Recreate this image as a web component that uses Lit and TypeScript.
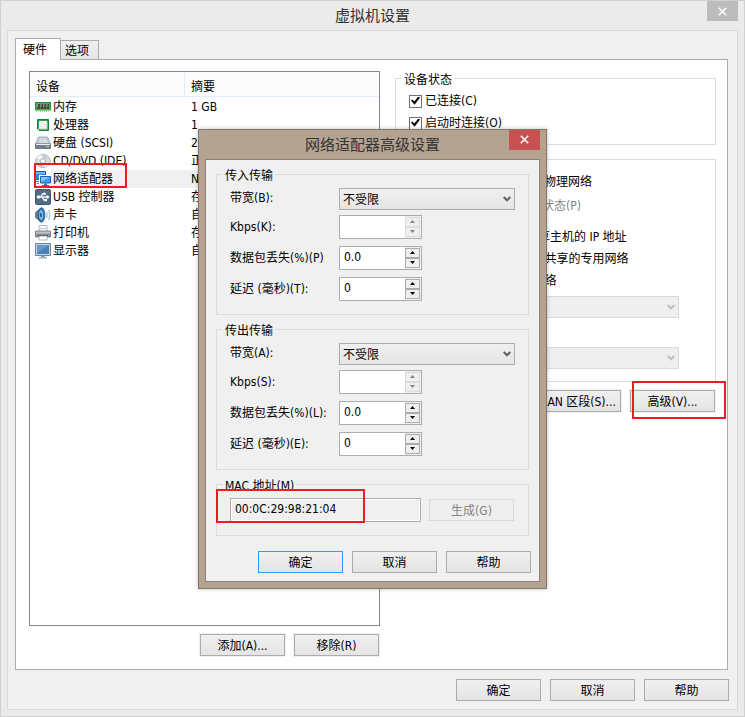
import { LitElement, html, css, svg } from "lit";
import { customElement, property } from "lit/decorators.js";
import { classMap } from "lit/directives/class-map.js";

const base = css`
  :host {
    font-family: "DejaVu Sans Condensed", "Noto Sans CJK SC", sans-serif;
    font-size: 12px;
    line-height: 18px;
    color: #000;
  }
  *,
  *::before {
    box-sizing: border-box;
  }
  button,
  input,
  select {
    font: inherit;
    color: inherit;
    margin: 0;
    border-radius: 0;
  }
  .btn {
    width: 85px;
    height: 22px;
    padding: 2px 0 0;
    line-height: 18px;
    border: 1px solid #acacac;
    background: linear-gradient(#f0f0f0, #e4e4e4);
    box-shadow: 0 0 0 1px #f0f0f0;
    white-space: nowrap;
  }
  .btn.primary {
    border-color: #3399ff;
  }
  .btn:disabled {
    border-color: #d9d9d9;
    background: #efefef;
    color: #838383;
  }
  .group {
    margin: 0;
    min-width: 0;
    padding: 6px 13px 13px;
    border: 1px solid #dcdcdc;
  }
  .group > legend {
    margin-left: -7px;
    padding: 0 2px;
    height: 15px;
    line-height: 18px;
  }
  .actions {
    display: flex;
    justify-content: flex-end;
    gap: 9px;
  }
  .title {
    margin: 0;
    font-size: 15px;
    font-weight: 400;
    line-height: 30px;
    text-align: center;
    color: #333;
  }
  .close {
    position: absolute;
    top: 0;
    right: 6px;
    width: 31px;
    height: 20px;
    padding: 0;
    border: 0;
    display: grid;
    place-items: center;
  }
  .mark {
    position: absolute;
    border: 2px solid #ed1c24;
    pointer-events: none;
  }
`;

const closeGlyph = html`<svg width="9" height="9" viewBox="0 0 9 9" aria-hidden="true">
  <path d="M.8.8 8.200 8.200M8.200.8.8 8.200" stroke="#fff" stroke-width="1.600" />
</svg>`;

const icons = {
  memory: svg`
    <path d="M0 3h16v9H0z" fill="#4fae57"/><path d="M0 3h16v1H0z" fill="#2b8a3d"/>
    <path d="M0 3h1v8H0zM15 3h1v8h-1z" fill="#2b8a3d"/>
    <path d="M2 5h3v5H2zM5.500 5h2.500v5H5.500zM8.500 5H11v5H8.500zM11.500 5H14v5h-2.500z" fill="#3f4742"/>
    <path d="M2 5h1v3H2zM5.500 5h1v3h-1zM8.500 5h1v3h-1zM11.500 5h1v3h-1z" fill="#959e97"/>
    <path d="M0 11h16v1H0z" fill="#8fcf8b"/>
    <path d="M1 12h1v1H1zM3 12h1v1H3zM5 12h1v1H5zM7 12h1v1H7zM9 12h1v1H9zM11 12h1v1h-1zM13 12h1v1h-1z" fill="#d5c98a"/>`,
  cpu: svg`
    <path d="M2.500 2.500h11v11h-11z" fill="#33a052" stroke="#178040"/>
    <path d="M4.500 4.500h7v7h-7z" fill="#efefef" stroke="#fff"/>
    <path d="M12 5v7H5" fill="none" stroke="#b9c9b9"/>
    <path d="M2 12h2v2H2z" fill="#c4e6ae"/>`,
  disk: svg`
    <path d="M3.500 2h9L15.500 9H.5z" fill="#c3c9d0" stroke="#98a0a9" stroke-width=".8"/>
    <path d="M5 3h6l2 5H4z" fill="#d6dbe0"/>
    <path d="M.5 9h15v4.500H.5z" fill="#727d89" stroke="#5c6672" stroke-width=".8"/>
    <path d="M1 9h14v1H1z" fill="#eef1f4"/><path d="M11 11h3v1h-3z" fill="#9be89b"/>`,
  cd: svg`
    <ellipse cx="8" cy="8" rx="7.500" ry="6.500" fill="#d9dde1" stroke="#a5acb3" stroke-width=".8"/>
    <path d="M8 8 1.500 5A8 7 0 0 1 6 1.800zM8 8l6.500 3A8 7 0 0 1 10 14.200z" fill="#f5f7f8"/>
    <path d="M8 8 9 1.800 12 3zM8 8 7 14.200 4 13z" fill="#bcc3ca"/>
    <ellipse cx="8" cy="8" rx="2.800" ry="2.400" fill="#eef1f3" stroke="#949ca4" stroke-width=".7"/>
    <circle cx="8" cy="8" r="1" fill="#fff"/>`,
  network: svg`
    <path d="M.5.500h10v8H.5z" fill="#2f8be0" stroke="#1d5fa6"/><path d="M1 1h9v2H1z" fill="#6fb5f2"/>
    <path d="M1 10h4v1H1zM2 12h3v1H2z" fill="#5f7f9f"/>
    <path d="M4 4h12v9H4z" fill="#fff"/>
    <path d="M5.500 5.500h10v6.500h-10z" fill="#3f9ced" stroke="#1e5fa5"/>
    <path d="M6 6h9l-9 5z" fill="#83c6fa"/>
    <path d="M9 12.500h3V14H9zM7 14h7v1.500H7z" fill="#3a6fa5"/>`,
  usb: svg`
    <rect x=".5" y=".5" width="15" height="15" rx="1.500" fill="#4f6b88" stroke="#415a74"/>
    <path d="M3 8h9M5.500 8l2-3h2M7 8l2 3h2" fill="none" stroke="#f4f6f8" stroke-width="1.300"/>
    <circle cx="3.500" cy="8" r="1.800" fill="#fff"/><path d="m11.500 5.800 3.300 2.200-3.300 2.200z" fill="#fff"/>
    <circle cx="9.500" cy="4.800" r="1.300" fill="#fff"/><path d="M9.500 10h2.500v2.200H9.500z" fill="#fff"/>`,
  sound: svg`
    <path d="M.5 5.500 6 1v14L.5 10.500z" fill="#6b7f93" stroke="#4b5c6d" stroke-width=".7"/>
    <ellipse cx="6.500" cy="8" rx="3.300" ry="7.200" fill="#2d7cc4" stroke="#33485d" stroke-width=".8"/>
    <ellipse cx="6" cy="8" rx="2" ry="4.800" fill="#7cc0f0"/>
    <ellipse cx="5.800" cy="8" rx="1" ry="2.300" fill="#1d5a99"/>
    <path d="M11.300 5q1.700 3 0 6M13.500 3q2.600 5 0 10" fill="none" stroke="#8cc4ee" stroke-width="1.100"/>`,
  printer: svg`
    <path d="M4 .500h8V7H4z" fill="#fafbfc" stroke="#a0a6ad" stroke-width=".8"/>
    <path d="M5 3h6v1H5z" fill="#c6cbd1"/>
    <path d="M.5 6h15v6H.5z" fill="#8b9199" stroke="#666d76" stroke-width=".8"/>
    <path d="M1 6.500h14v2H1z" fill="#bfc4ca"/>
    <path d="M3 10h10v1H3z" fill="#3c4148"/>
    <path d="M4 11h8v4H4z" fill="#fff" stroke="#a0a6ad" stroke-width=".8"/>`,
  display: svg`
    <path d="M.5.500h15v12H.5z" fill="#c9d3dd" stroke="#71859a"/>
    <path d="M2 2h12v9H2z" fill="#4681b8"/><path d="M2 2h12L2 10z" fill="#6699c8"/>
    <path d="M6 13h4v1H6z" fill="#8794a1"/><path d="M4 14h8v1.500H4z" fill="#a7b3bf"/>`,
};

type IconName = keyof typeof icons;

const devices: { icon: IconName; name: string; info: string; selected?: boolean }[] = [
  { icon: "memory", name: "内存", info: "1 GB" },
  { icon: "cpu", name: "处理器", info: "1" },
  { icon: "disk", name: "硬盘 (SCSI)", info: "20 GB" },
  { icon: "cd", name: "CD/DVD (IDE)", info: "正在使用文件" },
  { icon: "network", name: "网络适配器", info: "NAT", selected: true },
  { icon: "usb", name: "USB 控制器", info: "存在" },
  { icon: "sound", name: "声卡", info: "自动检测" },
  { icon: "printer", name: "打印机", info: "存在" },
  { icon: "display", name: "显示器", info: "自动检测" },
];

@customElement("drop-down")
class DropDown extends LitElement {
  @property() value = "";
  @property() label = "";
  @property({ type: Boolean }) disabled = false;

  static styles = [
    base,
    css`
      :host {
        display: grid;
        height: 22px;
      }
      select,
      svg {
        grid-area: 1 / 1;
      }
      select {
        appearance: none;
        width: 100%;
        height: 22px;
        padding: 2px 20px 0 3px;
        line-height: 18px;
        border: 1px solid #acacac;
        background: linear-gradient(#f0f0f0, #e5e5e5);
      }
      select:disabled {
        border-color: #d9d9d9;
        background: #efefef;
        opacity: 1;
      }
      svg {
        place-self: center end;
        margin-right: 4px;
        pointer-events: none;
      }
    `,
  ];

  render() {
    return html`<select aria-label=${this.label} ?disabled=${this.disabled}>
        <option>${this.value}</option>
      </select>
      <svg width="8" height="6" viewBox="0 0 8 6" aria-hidden="true">
        <path d="M.7 1 4 4.300 7.300 1" fill="none" stroke=${this.disabled ? "#bfbfbf" : "#606060"} stroke-width="2" />
      </svg>`;
  }
}

@customElement("spin-box")
class SpinBox extends LitElement {
  @property() value = "";
  @property() label = "";
  @property({ type: Boolean }) disabled = false;

  static styles = [
    base,
    css`
      :host {
        display: grid;
        grid-template-columns: 1fr 16px;
        width: 83px;
        height: 24px;
        border: 1px solid #abadb3;
        background: #fff;
        box-sizing: border-box;
      }
      input {
        min-width: 0;
        padding: 0 0 2px 4px;
        border: 0;
        background: #fff;
      }
      .arrows {
        display: grid;
        grid-template-rows: 1fr 1fr;
        padding: 1px 1px 1px 0;
        background: #f0f0f0;
      }
      button {
        display: grid;
        place-items: center;
        min-height: 0;
        padding: 0;
        border: 1px solid #acacac;
        background: #efefef;
      }
      button:disabled {
        border-color: #dcdcdc;
      }
      path {
        fill: #000;
      }
      button:disabled path {
        fill: #838383;
      }
    `,
  ];

  render() {
    const arrow = (name: string, d: string) => html`<button aria-label=${name} ?disabled=${this.disabled}>
      <svg width="5" height="3" viewBox="0 0 5 3" aria-hidden="true"><path d=${d} /></svg>
    </button>`;
    return html`<input type="text" inputmode="decimal" aria-label=${this.label} .value=${this.value} ?disabled=${this.disabled} />
      <span class="arrows">${arrow("增加", "M0 3 2.500 0 5 3z")}${arrow("减少", "M0 0h5L2.500 3z")}</span>`;
  }
}

@customElement("adapter-dialog")
class AdapterDialog extends LitElement {
  static styles = [
    base,
    css`
      :host {
        display: block;
        position: relative;
        box-sizing: border-box;
        width: 349px;
        padding: 0 6px 6px;
        border: 1px solid #85766a;
        background: #b4a391;
        box-shadow: 0 0 4px rgba(0, 0, 0, 0.25);
      }
      .title {
        height: 29px;
      }
      .close {
        background: #c75050;
      }
      .body {
        position: relative;
        display: flex;
        flex-direction: column;
        gap: 7px;
        padding: 7px 10px 8px;
        border: 1px solid #8f8073;
        background: #f0f0f0;
      }
      .fields {
        display: grid;
        grid-template-columns: 109px auto;
        grid-template-rows: 20px;
        align-items: center;
        row-gap: 7px;
      }
      .fields > * {
        white-space: nowrap;
      }
      drop-down {
        width: 176px;
        align-self: start;
      }
      .mac {
        display: flex;
        align-items: center;
        gap: 8px;
      }
      .mac input {
        flex: 1;
        min-width: 0;
        height: 24px;
        padding: 0 4px 2px;
        border: 1px solid #abadb3;
        background: #f0f0f0;
        box-shadow: inset 0 0 0 1px #fff;
      }
      .mac .btn {
        margin-right: 1px;
        box-shadow: none;
      }
      .actions {
        margin: 8px -2px 0 0;
      }
      .mark {
        left: 10px;
        bottom: 58px;
        width: 149px;
        height: 34px;
      }
    `,
  ];

  private traffic(title: string, keys: string[]) {
    const row = (text: string, value: string, disabled = false) => html`
      <span>${text}</span>
      <spin-box label=${text} value=${value} ?disabled=${disabled}></spin-box>
    `;
    return html`<fieldset class="group">
      <legend>${title}</legend>
      <div class="fields">
        <span>${keys[0]}</span>
        <drop-down label=${keys[0]} value="不受限"></drop-down>
        ${row(keys[1], "", true)} ${row(keys[2], "0.0")} ${row(keys[3], "0")}
      </div>
    </fieldset>`;
  }

  render() {
    return html`
      <h2 class="title">网络适配器高级设置</h2>
      <button class="close" aria-label="关闭">${closeGlyph}</button>
      <div class="body">
        ${this.traffic("传入传输", ["带宽(B):", "Kbps(K):", "数据包丢失(%)(P)", "延迟 (毫秒)(T):"])}
        ${this.traffic("传出传输", ["带宽(A):", "Kbps(S):", "数据包丢失(%)(L):", "延迟 (毫秒)(E):"])}
        <fieldset class="group">
          <legend>MAC 地址(M)</legend>
          <div class="mac">
            <input type="text" aria-label="MAC 地址(M)" .value=${"00:0C:29:98:21:04"} />
            <button class="btn" disabled>生成(G)</button>
          </div>
        </fieldset>
        <div class="actions">
          <button class="btn primary">确定</button>
          <button class="btn">取消</button>
          <button class="btn">帮助</button>
        </div>
        <div class="mark"></div>
      </div>
    `;
  }
}

@customElement("app-root")
class AppRoot extends LitElement {
  static styles = [
    base,
    css`
      :host {
        display: block;
      }
      .window {
        position: relative;
        display: flex;
        flex-direction: column;
        min-height: 100vh;
        padding: 0 6px 6px;
        border: 1px solid #d0d0d0;
        background: #ebebeb;
      }
      .title {
        height: 29px;
      }
      .close {
        background: #bcbcbc;
      }
      .client {
        flex: 1;
        display: flex;
        flex-direction: column;
        padding: 7px 8px 8px 7px;
        border: 1px solid #d9d9d9;
        background: #f0f0f0;
      }
      .tabs {
        display: flex;
        align-items: flex-end;
        height: 21px;
      }
      .tab {
        position: relative;
        width: 38px;
        height: 19px;
        padding: 2px 0 0 4px;
        line-height: 16px;
        text-align: left;
        border: 1px solid #acacac;
        border-width: 1px 1px 0 0;
        background: linear-gradient(#f0f0f0, #e5e5e5);
      }
      .tab.active {
        width: 46px;
        height: 22px;
        margin-bottom: -1px;
        padding: 0 0 0 7px;
        border-width: 1px 1px 0 1px;
        background: #fff;
      }
      .page {
        flex: 1;
        display: grid;
        grid-template-columns: minmax(0, 351fr) minmax(0, 321fr);
        gap: 15px;
        padding: 11px 11px 13px 13px;
        border: 1px solid #acacac;
        background: #fff;
        margin-right: 1px;
      }
      .left,
      .right {
        display: flex;
        flex-direction: column;
      }
      .left {
        gap: 8px;
      }
      .left .actions {
        margin-right: 1px;
      }
      .list {
        position: relative;
        flex: 1;
        border: 1px solid #828790;
      }
      table {
        width: 100%;
        table-layout: fixed;
        border-spacing: 0;
      }
      th {
        height: 25px;
        padding: 6px 6px 0;
        text-align: left;
        font-weight: 400;
        background: #fcfcfc;
        border-bottom: 1px solid #e0ecfa;
      }
      th:first-child {
        width: 155px;
        border-right: 1px solid #e0ecfa;
      }
      td {
        height: 18px;
        padding: 0;
        white-space: nowrap;
      }
      td:last-child {
        padding-left: 6px;
      }
      tbody::before {
        content: "";
        display: block;
        height: 1px;
      }
      .device {
        display: flex;
        align-items: center;
        padding-left: 5px;
      }
      .device span {
        flex: 1;
        padding-left: 2px;
      }
      .selected .device span,
      .selected td:last-child {
        background: #f0f0f0;
      }
      .device svg {
        flex: none;
      }
      .list .mark {
        left: 4px;
        top: 91px;
        width: 93px;
        height: 25px;
      }
      .right {
        gap: 7px;
      }
      .right .group {
        padding-bottom: 12px;
      }
      .status {
        display: grid;
        gap: 4px;
      }
      .choice {
        display: flex;
        align-items: center;
        gap: 3px;
        white-space: nowrap;
      }
      .choice input {
        appearance: none;
        width: 13px;
        height: 13px;
        border: 1px solid #707070;
        background: #fff;
        display: grid;
        place-items: center;
      }
      .choice input[type="radio"] {
        border-radius: 50%;
      }
      .choice input[type="checkbox"]:checked::before {
        content: "";
        width: 9px;
        height: 9px;
        background: #000;
        clip-path: polygon(0 45%, 16% 32%, 36% 56%, 82% 0, 100% 12%, 40% 92%);
      }
      .choice input[type="radio"]:checked::before {
        content: "";
        width: 5px;
        height: 5px;
        border-radius: 50%;
        background: #000;
      }
      .modes {
        display: grid;
        row-gap: 4px;
      }
      .replicate {
        margin: 2px 0 9px 21px;
        color: #838383;
      }
      .modes drop-down {
        margin: 2px 23px 1px 16px;
      }
      .modes .last {
        margin-bottom: 0;
      }
      .extra {
        position: relative;
        margin: 1px 1px 0 0;
      }
      .extra .mark {
        right: -11px;
        top: -9px;
        width: 94px;
        height: 38px;
      }
      .footer {
        margin-top: 9px;
      }
      .overlay {
        position: absolute;
        inset: 0;
        display: grid;
        place-items: center;
      }
    `,
  ];

  private radio(text: string, checked = false) {
    return html`<label class="choice"><input type="radio" name="mode" ?checked=${checked} />${text}</label>`;
  }

  render() {
    return html`
      <main class="window">
        <h1 class="title">虚拟机设置</h1>
        <button class="close" aria-label="关闭">${closeGlyph}</button>
        <div class="client">
          <div class="tabs" role="tablist">
            <button class="tab active" role="tab" aria-selected="true">硬件</button>
            <button class="tab" role="tab" aria-selected="false">选项</button>
          </div>
          <div class="page">
            <div class="left">
              <div class="list">
                <table>
                  <thead>
                    <tr><th>设备</th><th>摘要</th></tr>
                  </thead>
                  <tbody>
                    ${devices.map(
                      (d) => html`<tr class=${classMap({ selected: !!d.selected })}>
                        <td>
                          <div class="device">
                            <svg width="16" height="16" viewBox="0 0 16 16" aria-hidden="true">${icons[d.icon]}</svg>
                            <span>${d.name}</span>
                          </div>
                        </td>
                        <td>${d.info}</td>
                      </tr>`
                    )}
                  </tbody>
                </table>
                <div class="mark"></div>
              </div>
              <div class="actions">
                <button class="btn">添加(A)...</button>
                <button class="btn">移除(R)</button>
              </div>
            </div>
            <div class="right">
              <fieldset class="group">
                <legend>设备状态</legend>
                <div class="status">
                  <label class="choice"><input type="checkbox" checked />已连接(C)</label>
                  <label class="choice"><input type="checkbox" checked />启动时连接(O)</label>
                </div>
              </fieldset>
              <fieldset class="group">
                <legend>网络连接</legend>
                <div class="modes">
                  ${this.radio("桥接模式(B): 直接连接物理网络")}
                  <label class="choice replicate"><input type="checkbox" disabled />复制物理网络连接状态(P)</label>
                  ${this.radio("NAT 模式(N)：用于共享主机的 IP 地址", true)}
                  ${this.radio("仅主机模式(H): 与主机共享的专用网络")}
                  ${this.radio("自定义(U): 特定虚拟网络")}
                  <drop-down label="特定虚拟网络" disabled></drop-down>
                  ${this.radio("LAN 区段(L):")}
                  <drop-down class="last" label="LAN 区段" disabled></drop-down>
                </div>
              </fieldset>
              <div class="actions extra">
                <button class="btn">LAN 区段(S)...</button>
                <button class="btn">高级(V)...</button>
                <div class="mark"></div>
              </div>
            </div>
          </div>
          <div class="actions footer">
            <button class="btn">确定</button>
            <button class="btn">取消</button>
            <button class="btn">帮助</button>
          </div>
        </div>
        <div class="overlay"><adapter-dialog></adapter-dialog></div>
      </main>
    `;
  }
}
